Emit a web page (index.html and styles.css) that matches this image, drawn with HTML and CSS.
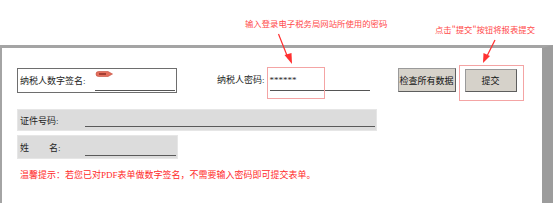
FILE: index.html
```html
<!DOCTYPE html>
<html lang="zh-CN">
<head>
    <meta charset="UTF-8">
    <title>纳税人提交</title>
    <link rel="stylesheet" href="styles.css">
</head>
<body>
    <div class="hint hint-pwd">输入登录电子税务局网站所使用的密码</div>
    <div class="hint hint-submit">点击"提交"按钮将报表提交</div>

    <div class="frame">
        <div class="form">
            <div class="row-top">
                <div class="sign-box">
                    <span class="label">纳税人数字签名:</span>
                    <span class="sign-line">
                        <svg class="pen" width="18" height="6" viewBox="0 0 18 6">
                            <path d="M1 3 Q1 0.5 3.5 0.5 L13 0.5 L17.5 3 L13 5.5 L3.5 5.5 Q1 5.5 1 3 Z" fill="#e4705e" stroke="#c24a3a" stroke-width="0.6"/>
                            <line x1="4" y1="3" x2="11" y2="3" stroke="#7a1e16" stroke-width="1.2"/>
                        </svg>
                    </span>
                </div>

                <span class="label pwd-label">纳税人密码:</span>
                <div class="pwd-field">
                    <span class="mark mark-pwd"></span>
                    <span class="stars">******</span>
                </div>

                <button class="btn btn-check">检查所有数据</button>
                <div class="submit-wrap">
                    <span class="mark mark-submit"></span>
                    <button class="btn btn-submit">提交</button>
                </div>
            </div>

            <div class="gray-row id-row">
                <span class="label">证件号码:</span>
                <span class="line"></span>
            </div>

            <div class="gray-row name-row">
                <span class="label"><span class="gap">姓</span>名:</span>
                <span class="line"></span>
            </div>

            <p class="warn">温馨提示：若您已对PDF表单做数字签名，不需要输入密码即可提交表单。</p>
        </div>
    </div>

    <svg class="arrows" width="553" height="203" viewBox="0 0 553 203">
        <path d="M278.5 34 L288 58" stroke="#ff3030" stroke-width="1.2" fill="none"/>
        <polygon points="292,64 284.5,55 291.5,53" fill="#ff3030"/>
        <path d="M495 40 L487 56" stroke="#ff3030" stroke-width="1.2" fill="none"/>
        <polygon points="483,63 483.5,53 490,56" fill="#ff3030"/>
    </svg>
</body>
</html>
```

FILE: styles.css
```css
* {
    box-sizing: border-box;
}
body {
    margin: 0;
    width: 553px;
    height: 203px;
    overflow: hidden;
    background-color: white;
    font-family: "Liberation Serif", "Noto Sans CJK SC", serif;
    font-size: 9px;
    color: #1e1e1e;
    position: relative;
}
.hint {
    position: absolute;
    font-family: "Noto Sans CJK SC", sans-serif;
    font-size: 8.4px;
    line-height: 12px;
    color: #ff4a4a;
    white-space: nowrap;
}
.hint-pwd {
    left: 245px;
    top: 17px;
}
.hint-submit {
    left: 435px;
    top: 23px;
}
.arrows {
    position: absolute;
    left: 0;
    top: 0;
    pointer-events: none;
}
.frame {
    margin-top: 45px;
    width: 553px;
    height: 158px;
    border-top: 3px solid #a4a4a4;
    border-left: 2px solid #a4a4a4;
    border-right: 11px solid #9c9c9c;
}
.form {
    padding: 20px 0 0 15px;
}
.row-top {
    display: flex;
    align-items: flex-start;
    height: 41px;
}
.label {
    white-space: nowrap;
}
.sign-box {
    width: 160px;
    height: 25px;
    border: 1px solid #6e6e6e;
    display: flex;
    align-items: center;
    padding: 0 1px 0 2px;
}
.sign-line {
    margin-left: auto;
    width: 80px;
    height: 21px;
    border-bottom: 1px solid #555;
    position: relative;
}
.pen {
    position: absolute;
    left: 0;
    top: 1px;
}
.pwd-label {
    margin-left: 40px;
    line-height: 24px;
}
.pwd-field {
    position: relative;
    margin-left: 5px;
    width: 100px;
    height: 23px;
    border-bottom: 1px solid #555;
    display: flex;
    align-items: center;
}
.stars {
    font-size: 9px;
    padding-top: 2px;
}
.mark {
    position: absolute;
    border: 1px solid #f4a4a4;
}
.mark-pwd {
    left: -3px;
    top: -1px;
    width: 58px;
    height: 32px;
}
.btn {
    font-family: "Noto Sans CJK SC", sans-serif;
    font-size: 9px;
    color: #111;
    background-color: #d6d2ca;
    border: 1px solid;
    border-color: #9a9a9a #5e5e5e #5e5e5e #9a9a9a;
    padding: 0;
    white-space: nowrap;
}
.btn-check {
    margin-left: 28px;
    width: 58px;
    height: 24px;
}
.submit-wrap {
    position: relative;
    margin-left: 9px;
    margin-top: 1px;
}
.btn-submit {
    display: block;
    width: 52px;
    height: 23px;
}
.mark-submit {
    left: -6px;
    top: -4px;
    width: 65px;
    height: 36px;
}
.gray-row {
    display: flex;
    align-items: center;
    background-color: #dcdcdc;
    border: 1px solid #e6e6e6;
    padding-left: 2px;
    position: relative;
}
.gray-row .label {
    width: 66px;
}
.gray-row .line {
    position: absolute;
    left: 67px;
    border-bottom: 1px solid #5a5a5a;
}
.id-row {
    margin-top: 0;
    width: 360px;
    height: 22px;
}
.id-row .line {
    right: 1px;
    bottom: 3px;
}
.name-row {
    margin-top: 4px;
    width: 161px;
    height: 24px;
}
.name-row .line {
    width: 91px;
    bottom: 2px;
}
.gap {
    display: inline-block;
    width: 29px;
}
.warn {
    margin: 10px 0 0 3px;
    color: #ff2a2a;
    font-size: 9px;
    line-height: 12px;
    white-space: nowrap;
}
```
